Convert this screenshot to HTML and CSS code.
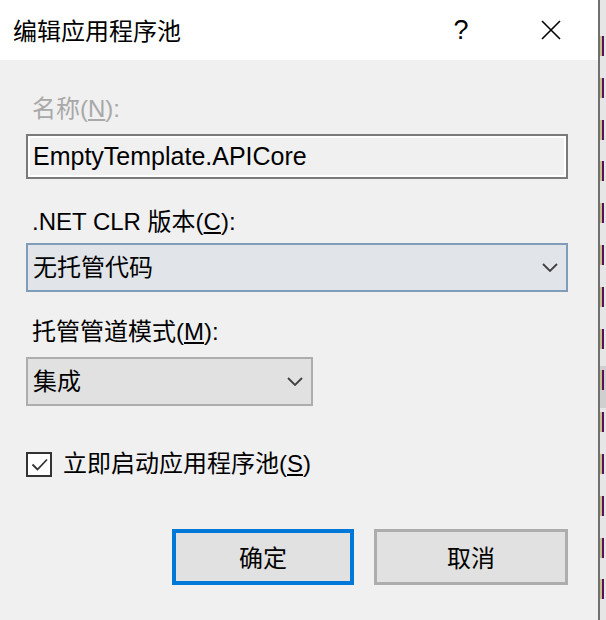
FILE: index.html
```html
<!DOCTYPE html>
<html lang="zh-CN">
<head>
<meta charset="utf-8">
<title>编辑应用程序池</title>
<link rel="stylesheet" href="styles.css">
</head>
<body>
<div class="screen">
  <div class="dialog">
    <div class="titlebar">
      <div class="title">编辑应用程序池</div>
      <div class="help">?</div>
      <div class="close">
        <svg width="20" height="20" viewBox="0 0 20 20"><path d="M1 1 L19 19 M19 1 L1 19" stroke="#000" stroke-width="1.6" fill="none"/></svg>
      </div>
    </div>
    <div class="content">
      <div class="label disabled">名称(<u>N</u>):</div>
      <div class="textbox">EmptyTemplate.APICore</div>
      <div class="label gap2">.NET CLR 版本(<u>C</u>):</div>
      <div class="combo combo-hover">
        <span class="combo-text">无托管代码</span>
        <svg class="chev" width="16" height="9" viewBox="0 0 16 9"><path d="M1 1 L8 8 L15 1" stroke="#404040" stroke-width="1.8" fill="none"/></svg>
      </div>
      <div class="label gap3">托管管道模式(<u>M</u>):</div>
      <div class="combo combo-small">
        <span class="combo-text">集成</span>
        <svg class="chev" width="16" height="9" viewBox="0 0 16 9"><path d="M1 1 L8 8 L15 1" stroke="#404040" stroke-width="1.8" fill="none"/></svg>
      </div>
      <div class="check-row">
        <div class="checkbox">
          <svg width="21" height="21" viewBox="0 0 21 21"><path d="M3.5 10.5 L8.5 15.5 L18 5.5" stroke="#333" stroke-width="1.8" fill="none"/></svg>
        </div>
        <span class="check-label">立即启动应用程序池(<u>S</u>)</span>
      </div>
      <div class="buttons">
        <div class="btn btn-default">确定</div>
        <div class="btn btn-cancel">取消</div>
      </div>
    </div>
  </div>
  <div class="strip">
    <div class="bar"></div><div class="bar"></div><div class="bar"></div><div class="bar"></div>
    <div class="bar"></div><div class="bar"></div><div class="bar"></div><div class="bar"></div>
    <div class="bar"></div><div class="bar"></div><div class="bar"></div><div class="bar"></div>
    <div class="bar"></div><div class="bar"></div>
  </div>
</div>
</body>
</html>
```
FILE: styles.css
```css
* { box-sizing: border-box; }
html, body {
  margin: 0;
  padding: 0;
  width: 606px;
  height: 620px;
  overflow: hidden;
  background: #f0f0f0;
  font-family: "Liberation Sans", "Noto Sans CJK SC", sans-serif;
  font-size: 24px;
  color: #000;
}
.screen {
  display: flex;
  width: 606px;
  height: 620px;
}
.dialog {
  width: 600px;
  height: 620px;
  border-right: 2px solid #707070;
  background: #f0f0f0;
  display: flex;
  flex-direction: column;
}
.titlebar {
  height: 60px;
  background: #fff;
  display: flex;
  align-items: center;
  padding-left: 13px;
  padding-right: 37px;
  flex: none;
}
.title {
  flex: 1;
  font-family: "Noto Sans CJK SC", sans-serif;
  font-size: 24px;
  line-height: 32px;
}
.help {
  width: 20px;
  text-align: center;
  font-size: 27px;
  line-height: 32px;
  margin-right: 70px;
  margin-top: -1px;
}
.close {
  width: 20px;
  height: 20px;
  display: flex;
}
.content {
  padding: 33px 0 0 26px;
  display: flex;
  flex-direction: column;
}
.label {
  height: 32px;
  line-height: 32px;
  padding-left: 6px;
  white-space: nowrap;
}
.disabled { color: #a8a8a8; }
.gap2 { margin-top: 27px; }
.gap3 { margin-top: 24px; }
.textbox {
  margin-top: 9px;
  width: 542px;
  height: 45px;
  border: 2px solid #7a7a7a;
  box-shadow: inset 0 0 0 2px #fff;
  background: #f0f0f0;
  display: flex;
  align-items: center;
  padding-left: 5px;
  font-size: 25px;
}
.combo {
  height: 49px;
  display: flex;
  align-items: center;
  justify-content: space-between;
  padding-left: 5px;
  padding-right: 8px;
}
.combo-hover {
  margin-top: 5px;
  width: 542px;
  border: 2px solid #7f9cb9;
  background: #e1e5e9;
}
.combo-small {
  margin-top: 9px;
  width: 287px;
  border: 2px solid #adadad;
  background: #e1e1e1;
}
.combo-text { line-height: 32px; }
.chev { flex: none; }
.check-row {
  margin-top: 42px;
  height: 32px;
  display: flex;
  align-items: center;
}
.checkbox {
  width: 26px;
  height: 25px;
  border: 2px solid #333;
  background: #fff;
  display: flex;
  align-items: center;
  justify-content: center;
  flex: none;
}
.check-label {
  margin-left: 11px;
  line-height: 32px;
  white-space: nowrap;
}
.buttons {
  margin-top: 49px;
  width: 542px;
  display: flex;
  justify-content: flex-end;
  gap: 20px;
}
.btn {
  height: 56px;
  background: #e1e1e1;
  display: flex;
  align-items: center;
  justify-content: center;
  padding-bottom: 2px;
}
.btn-default {
  width: 182px;
  border: 4px solid #0078d7;
}
.btn-cancel {
  width: 194px;
  border: 3px solid #adadad;
}
.strip {
  width: 6px;
  height: 620px;
  background: linear-gradient(#e6e6e6 0, #e6e6e6 366px, #cfcfcf 366px, #cfcfcf 408px, #e6e6e6 408px);
  display: flex;
  flex-direction: column;
  padding-top: 36px;
  gap: 21.8px;
}
.bar {
  width: 4px;
  height: 20px;
  flex: none;
  background: linear-gradient(90deg, #c9c28c 0, #c9c28c 1.7px, #5a0f5c 1.7px, #5a0f5c 100%);
}
```
